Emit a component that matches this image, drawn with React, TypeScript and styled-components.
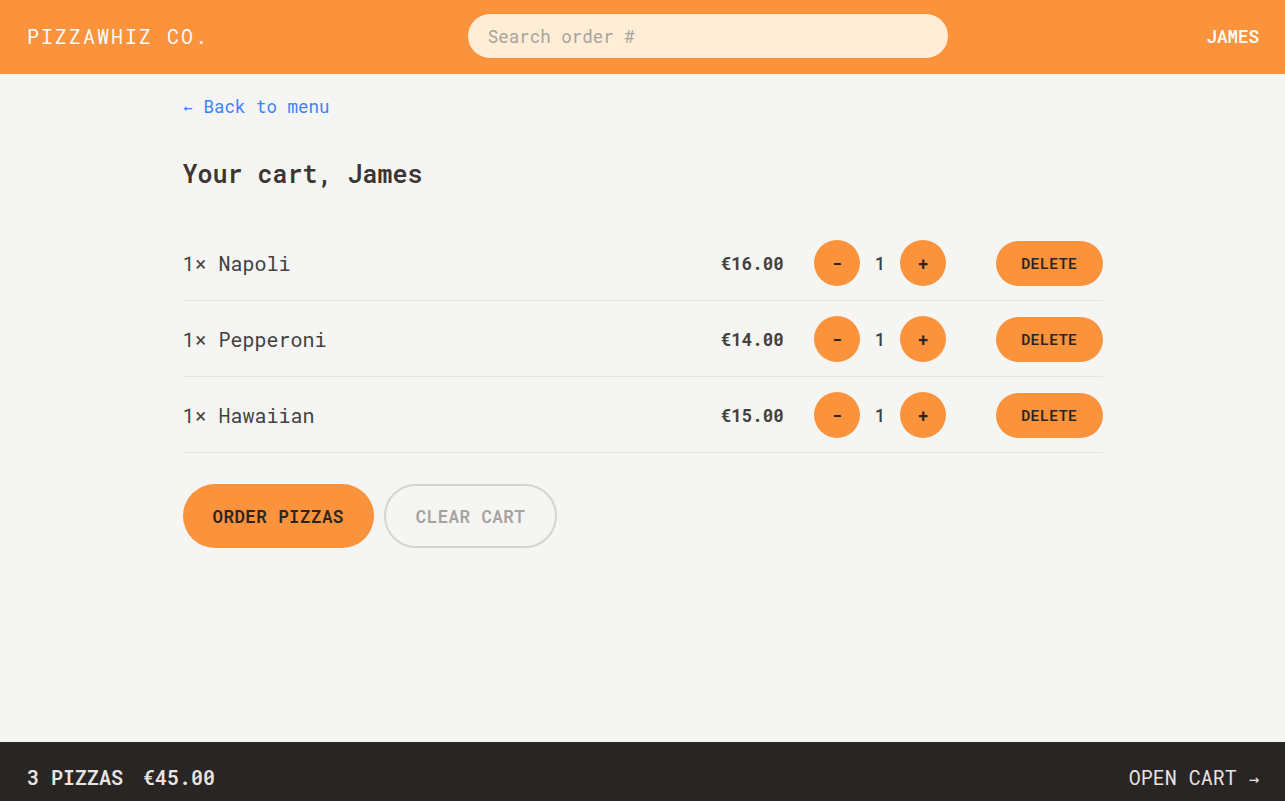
import styled, { createGlobalStyle } from "styled-components";

const GlobalStyle = createGlobalStyle`
  * { box-sizing: border-box; }
  body {
    margin: 0;
    background: #f5f5f4;
    color: #44403c;
    font-family: "Roboto Mono", "Liberation Mono", monospace;
  }
  button { font-family: inherit; }
`;

const Layout = styled.div`
  min-height: 100vh;
  display: flex;
  flex-direction: column;
`;

const Header = styled.header`
  height: 74px;
  padding: 0 26px 2px 27px;
  display: flex;
  align-items: center;
  justify-content: space-between;
  background: #fb923c;
`;

const Logo = styled.a`
  font-size: 20px;
  letter-spacing: 0.1em;
  text-transform: uppercase;
  color: #fafaf9;
  text-decoration: none;
`;

const Search = styled.input`
  width: 480px;
  height: 44px;
  border: none;
  border-radius: 999px;
  padding: 0 20px;
  background: #ffedd5;
  font-family: inherit;
  font-size: 17.5px;
  color: #44403c;
  outline: none;
  &::placeholder { color: #a8a29e; }
`;

const UserName = styled.div`
  font-size: 17.5px;
  font-weight: 600;
  color: #fafaf9;
  text-transform: uppercase;
`;

const Main = styled.main`
  flex: 1;
  width: 920px;
  margin: 0 auto;
  padding-top: 20px;
`;

const BackLink = styled.a`
  display: block;
  height: 25px;
  font-size: 17.5px;
  line-height: 25px;
  color: #3b82f6;
  text-decoration: none;
`;

const Arrow = styled.span<{ $size: number; $gap: number }>`
  display: inline-block;
  line-height: 1;
  font-family: "DejaVu Sans Mono", monospace;
  font-size: ${(p) => p.$size}px;
  margin: 0 ${(p) => p.$gap}px;
`;

const Title = styled.h2`
  margin: 37px 0 0;
  font-size: 25px;
  line-height: 35px;
  font-weight: 600;
  color: #3b3632;
`;

const List = styled.ul`
  list-style: none;
  margin: 34px 0 0;
  padding: 0;
`;

const Row = styled.li`
  display: flex;
  align-items: center;
  justify-content: space-between;
  padding: 15px 0 14px;
  border-bottom: 1px solid #e7e5e4;
`;

const ItemName = styled.p`
  margin: 0;
  font-size: 20px;
  color: #44403c;
`;

const Controls = styled.div`
  display: flex;
  align-items: center;
  gap: 30px;
`;

const Price = styled.p`
  margin: 0;
  font-size: 17.5px;
  font-weight: 700;
  color: #44403c;
`;

const Quantity = styled.div`
  display: flex;
  align-items: center;
  gap: 15px;
  font-size: 17.5px;
  font-weight: 500;
`;

const RoundButton = styled.button`
  width: 46px;
  height: 46px;
  border: none;
  border-radius: 50%;
  background: #fb923c;
  color: #292524;
  font-size: 17.5px;
  font-weight: 600;
  padding: 0;
  cursor: pointer;
`;

const DeleteButton = styled.button`
  margin-left: 20px;
  height: 45px;
  padding: 0 25px;
  border: none;
  border-radius: 999px;
  background: #fb923c;
  color: #292524;
  font-size: 15px;
  font-weight: 600;
  letter-spacing: 0.025em;
  text-transform: uppercase;
  cursor: pointer;
`;

const Actions = styled.div`
  display: flex;
  align-items: center;
  gap: 10px;
  margin-top: 31px;
`;

const Button = styled.button<{ $variant: "primary" | "secondary" }>`
  height: 64px;
  padding: 0 30px;
  border-radius: 999px;
  font-size: 17.5px;
  font-weight: 600;
  letter-spacing: 0.025em;
  text-transform: uppercase;
  cursor: pointer;
  border: ${(p) => (p.$variant === "primary" ? "none" : "2px solid #d6d3d1")};
  background: ${(p) => (p.$variant === "primary" ? "#fb923c" : "transparent")};
  color: ${(p) => (p.$variant === "primary" ? "#292524" : "#a8a29e")};
`;

const Footer = styled.footer`
  height: 59px;
  display: flex;
  align-items: center;
  justify-content: space-between;
  padding: 11px 26px 0 27px;
  background: #292524;
  color: #e7e5e4;
  font-size: 20px;
  line-height: 30px;
  text-transform: uppercase;
`;

const Summary = styled.p`
  margin: 0;
  display: flex;
  gap: 20px;
  font-weight: 600;
`;

const OpenCart = styled.a`
  color: #e7e5e4;
  text-decoration: none;
`;

const cart = [
  { name: "Napoli", qty: 1, price: 16 },
  { name: "Pepperoni", qty: 1, price: 14 },
  { name: "Hawaiian", qty: 1, price: 15 },
];

const euro = (n: number) => `€${n.toFixed(2)}`;

function App() {
  const total = cart.reduce((s, i) => s + i.price * i.qty, 0);
  const count = cart.reduce((s, i) => s + i.qty, 0);
  return (
    <Layout>
      <GlobalStyle />
      <Header>
        <Logo href="#">PizzaWhiz Co.</Logo>
        <Search placeholder="Search order #" />
        <UserName>James</UserName>
      </Header>
      <Main>
        <BackLink href="#">
          <Arrow $size={15} $gap={0.75}>←</Arrow> Back to menu
        </BackLink>
        <Title>Your cart, James</Title>
        <List>
          {cart.map((item) => (
            <Row key={item.name}>
              <ItemName>
                {item.qty}× {item.name}
              </ItemName>
              <Controls>
                <Price>{euro(item.price * item.qty)}</Price>
                <Quantity>
                  <RoundButton>-</RoundButton>
                  <span>{item.qty}</span>
                  <RoundButton>+</RoundButton>
                </Quantity>
                <DeleteButton>Delete</DeleteButton>
              </Controls>
            </Row>
          ))}
        </List>
        <Actions>
          <Button $variant="primary">Order pizzas</Button>
          <Button $variant="secondary">Clear cart</Button>
        </Actions>
      </Main>
      <Footer>
        <Summary>
          <span>{count} pizzas</span>
          <span>{euro(total)}</span>
        </Summary>
        <OpenCart href="#">
          Open cart <Arrow $size={17} $gap={0}>→</Arrow>
        </OpenCart>
      </Footer>
    </Layout>
  );
}

export default App;
